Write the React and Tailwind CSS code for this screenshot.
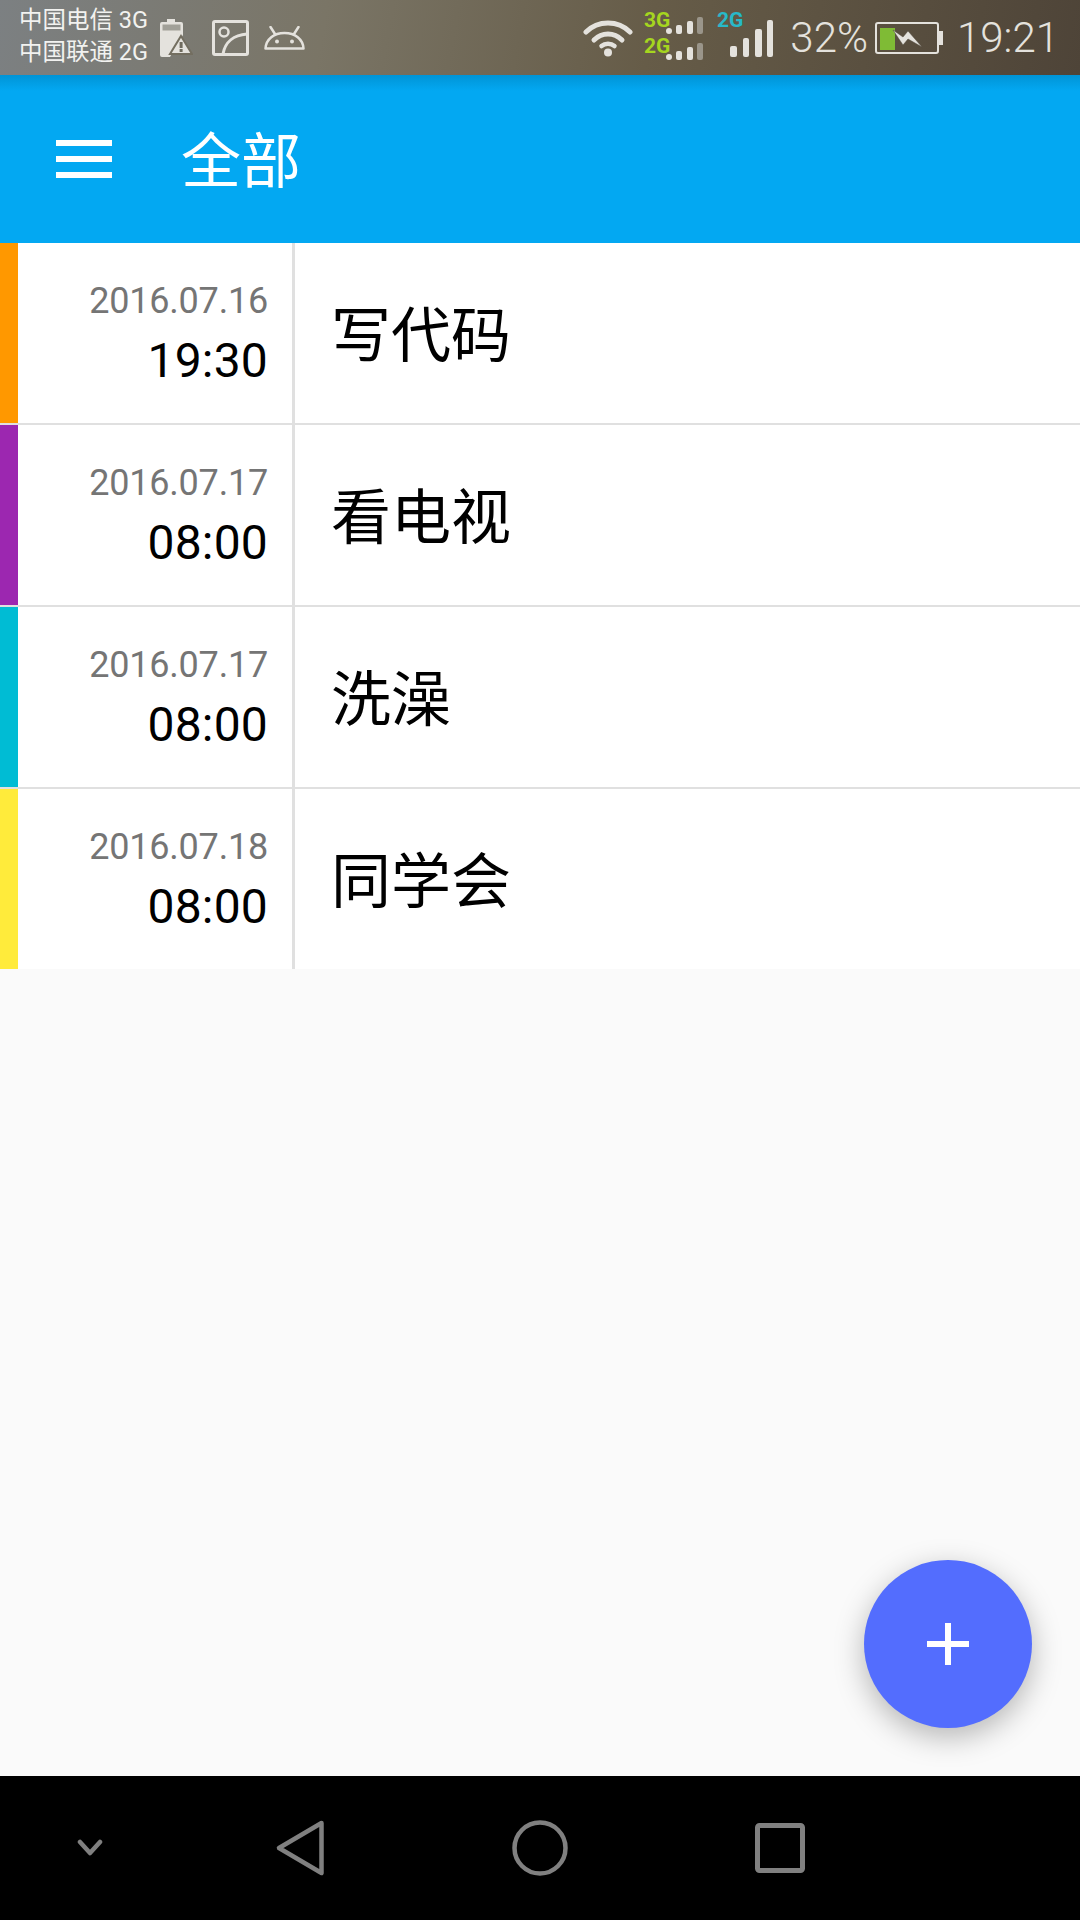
const ROWS = [
  { color: "bg-[#ff9800]", date: "2016.07.16", time: "19:30", title: "写代码" },
  { color: "bg-[#9c27b0]", date: "2016.07.17", time: "08:00", title: "看电视" },
  { color: "bg-[#00bcd4]", date: "2016.07.17", time: "08:00", title: "洗澡" },
  { color: "bg-[#ffeb3b]", date: "2016.07.18", time: "08:00", title: "同学会" },
];

const ICON = "#e4e2dd";

function StatusBar() {
  return (
    <div className="h-[75px] shrink-0 flex items-center bg-[linear-gradient(100deg,#7c8082_0%,#7a7566_30%,#665c48_60%,#4e4438_100%)] text-[#eeede9]">
      <div className="ml-[19px] w-[134px] mb-[3px] flex flex-col text-[23.5px] leading-[32px] text-[#f2f2f0]">
        <span className="whitespace-nowrap">中国电信 3G</span>
        <span className="whitespace-nowrap">中国联通 2G</span>
      </div>
      <svg className="ml-[6px]" width="34" height="38" viewBox="0 0 34 38">
        <path d="M8 0h8v3h6a2 2 0 0 1 2 2v11l-13 22H3a2 2 0 0 1-2-2V5a2 2 0 0 1 2-2h5z" fill={ICON} />
        <path d="M3.500 5.500h18v6h-18z" fill="#8b8a80" opacity="0.75" />
        <path d="M22 17 33 35H11z" fill={ICON} stroke="#736e60" strokeWidth="2" />
        <path d="M20.600 23h3v6h-3zM20.600 30h3v3h-3z" fill="#6f6b5e" />
      </svg>
      <svg className="ml-[19px]" width="37" height="36" viewBox="0 0 37 36">
        <rect x="1.500" y="1.500" width="34" height="33" rx="1.500" fill="none" stroke={ICON} strokeWidth="3" />
        <circle cx="12" cy="12" r="4.500" fill="none" stroke={ICON} strokeWidth="2.500" />
        <path d="M11 34C13 22 22 15 35 14" fill="none" stroke={ICON} strokeWidth="3" />
      </svg>
      <svg className="ml-[15px]" width="41" height="24" viewBox="0 0 41 24">
        <path d="M1.500 22.500C2 13 10 7 20.500 7S39 13 39.500 22.500z" fill="none" stroke={ICON} strokeWidth="2.500" strokeLinejoin="round" />
        <path d="M11 8 6.500 1M30 8l4.500-7" fill="none" stroke={ICON} strokeWidth="2.500" strokeLinecap="round" />
        <circle cx="13" cy="15.500" r="2" fill={ICON} />
        <circle cx="28" cy="15.500" r="2" fill={ICON} />
      </svg>

      <svg className="ml-auto" width="50" height="38" viewBox="0 0 50 38">
        <path d="M3 13C15 1 35 1 47 13" fill="none" stroke={ICON} strokeWidth="5" strokeLinecap="round" />
        <path d="M11 21C19 13 31 13 39 21" fill="none" stroke={ICON} strokeWidth="5" strokeLinecap="round" />
        <path d="M18.500 27C22 24 28 24 31.500 27" fill="none" stroke={ICON} strokeWidth="4.500" strokeLinecap="round" />
        <circle cx="25" cy="33.500" r="4" fill={ICON} />
      </svg>
      <svg className="ml-[10px] mb-[8px]" width="131" height="52" viewBox="0 0 131 52" style={{ fontFamily: "Roboto, sans-serif" }}>
        <text x="1" y="19" fontSize="21" fontWeight="700" fill="#a5d61f">3G</text>
        <text x="1" y="45" fontSize="21" fontWeight="700" fill="#a5d61f">2G</text>
        <text x="74" y="19" fontSize="21" fontWeight="700" fill="#27b9c8">2G</text>
        {[0, 26].map((dy) => (
          <g key={dy}>
            <rect x="23" y={20 + dy} width="6" height="6" rx="3" fill={ICON} />
            <rect x="33" y={17 + dy} width="6" height="9" rx="2" fill={ICON} />
            <rect x="44" y={13 + dy} width="6" height="13" rx="2" fill={ICON} />
            <rect x="54" y={9 + dy} width="6" height="17" rx="2" fill="#9a958a" />
          </g>
        ))}
        <rect x="87" y="38" width="7" height="11" rx="2" fill={ICON} />
        <rect x="100" y="30" width="6" height="19" rx="2" fill={ICON} />
        <rect x="112" y="21" width="7" height="28" rx="2" fill={ICON} />
        <rect x="124" y="12" width="6" height="37" rx="2" fill={ICON} />
      </svg>
      <span className="ml-[16px] text-[42px] leading-none font-light text-[#e4e2dd]">32%</span>
      <svg className="ml-[7px]" width="68" height="32" viewBox="0 0 68 32">
        <rect x="1" y="1" width="62" height="30" rx="2" fill="none" stroke={ICON} strokeWidth="2" />
        <rect x="64" y="9" width="4" height="14" fill={ICON} />
        <rect x="5" y="6" width="15" height="22" fill="#7fbb35" />
        <path d="M18 8 28 15 33 9 47 25 33 17 28 23z" fill={ICON} stroke="#50483c" strokeWidth="0.500" />
      </svg>
      <span className="ml-[14px] mr-[21px] text-[42px] leading-none font-light text-[#e4e2dd]">19:21</span>
    </div>
  );
}

function Toolbar() {
  return (
    <div className="h-[168px] shrink-0 flex items-center bg-[linear-gradient(#0094d6,#03a8f2_16px)] pl-[56px]">
      <div className="w-[56px] flex flex-col gap-[10px]">
        <div className="h-[6px] bg-white" />
        <div className="h-[6px] bg-white" />
        <div className="h-[6px] bg-white" />
      </div>
      <span className="ml-[69px] pt-[7px] text-[60px] leading-none text-white">全部</span>
    </div>
  );
}

function Row({ color, date, time, title, last }) {
  return (
    <div className={`flex bg-white ${last ? "h-[180px]" : "h-[182px] border-b-2 border-[#e0e0e0]"}`}>
      <div className={`w-[18px] ${color}`} />
      <div className="w-[274px] flex flex-col justify-center items-end pr-[24px] pb-[4px]">
        <span className="text-[36px] leading-[60px] tracking-[-0.2px] text-[#757575]">{date}</span>
        <span className="text-[48px] leading-[60px] tracking-[0.2px] text-black">{time}</span>
      </div>
      <div className="w-[3px] bg-[#e0e0e0]" />
      <div className="flex-1 flex items-center pl-[36px] pt-[8px] text-[60px] leading-none text-black">{title}</div>
    </div>
  );
}

function NavBar() {
  return (
    <div className="h-[144px] shrink-0 bg-black relative">
      <svg className="absolute left-[77px] top-[63px]" width="26" height="17" viewBox="0 0 26 17">
        <path d="M3 3 13 14 23 3" fill="none" stroke="#808080" strokeWidth="4.500" strokeLinejoin="round" strokeLinecap="round" />
      </svg>
      <svg className="absolute left-[275px] top-[43px]" width="52" height="58" viewBox="0 0 52 58">
        <path d="M46.500 4 4 29 46.500 54z" fill="none" stroke="#808080" strokeWidth="4.500" strokeLinejoin="round" />
      </svg>
      <svg className="absolute left-[512px] top-[43px]" width="56" height="58" viewBox="0 0 56 58">
        <circle cx="28" cy="29" r="25.500" fill="none" stroke="#808080" strokeWidth="4.500" />
      </svg>
      <svg className="absolute left-[755px] top-[47px]" width="50" height="50" viewBox="0 0 50 50">
        <rect x="2.500" y="2.500" width="45" height="45" rx="2" fill="none" stroke="#808080" strokeWidth="5" />
      </svg>
    </div>
  );
}

export default function App() {
  return (
    <div className="w-[1080px] h-[1920px] flex flex-col overflow-hidden font-[Roboto,'Noto_Sans_CJK_SC',sans-serif]">
      <StatusBar />
      <Toolbar />
      <div className="relative flex-1 bg-[#fafafa]">
        {ROWS.map((r, i) => (
          <Row key={i} {...r} last={i === ROWS.length - 1} />
        ))}
        <button className="absolute right-[48px] bottom-[48px] w-[168px] h-[168px] rounded-full bg-[#536dfe] flex items-center justify-center shadow-[0_9px_30px_rgba(0,0,0,0.28)]">
          <svg width="42" height="42" viewBox="0 0 42 42">
            <path d="M18 0h6v18h18v6H24v18h-6V24H0v-6h18z" fill="#fff" />
          </svg>
        </button>
      </div>
      <NavBar />
    </div>
  );
}
